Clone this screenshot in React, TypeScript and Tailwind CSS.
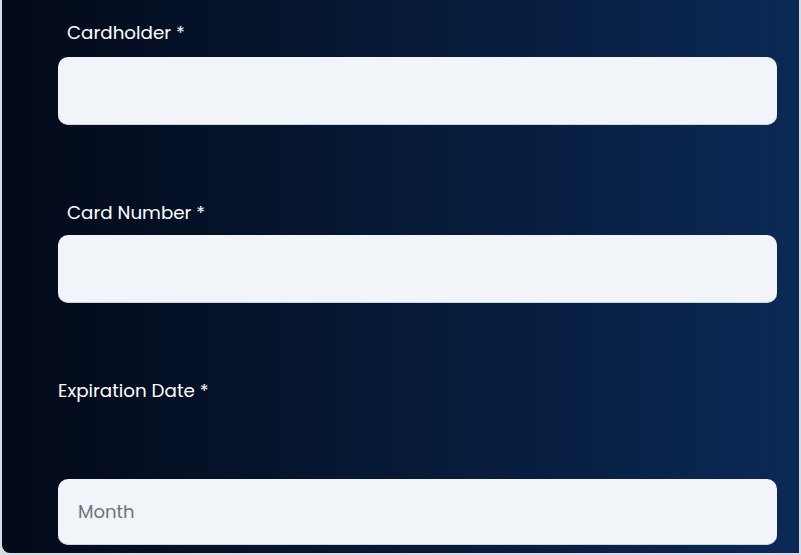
export default function App() {
  return (
    <div className="h-[555px] w-[801px] overflow-hidden bg-[#d9dde3] pl-[2px] pr-[2px] pb-[2px]">
      <div
        className="flex h-full flex-col rounded-bl-lg bg-gradient-to-r from-[#030a19] to-[#0b2956] pl-[56px] pr-[22px] pt-[21px]"
        style={{ fontFamily: '"Poppins", "Inter", "Open Sans", sans-serif' }}
      >
        <label className="block pl-[9px] text-[18.3px] font-normal leading-6 text-white">
          Cardholder *
        </label>
        <input
          type="text"
          className="mt-3 h-[68px] w-full rounded-[10px] border-b border-[#cbd5e1] bg-[#f1f5f9] px-5 text-[18px] text-[#1f2937] outline-none"
        />

        <label className="mt-[76px] block pl-[9px] text-[18.3px] font-normal leading-6 text-white">
          Card Number *
        </label>
        <input
          type="text"
          className="mt-[10px] h-[68px] w-full rounded-[10px] border-b border-[#cbd5e1] bg-[#f1f5f9] px-5 text-[18px] text-[#1f2937] outline-none"
        />

        <label className="mt-[76px] block text-[18.3px] font-normal leading-6 text-white">
          Expiration Date *
        </label>
        <input
          type="text"
          placeholder="Month"
          className="mt-[76px] h-[66px] w-full rounded-[10px] border-b border-[#cbd5e1] bg-[#f1f5f9] px-5 text-[18px] text-[#1f2937] outline-none placeholder:text-[#71717a]"
        />
      </div>
    </div>
  )
}
